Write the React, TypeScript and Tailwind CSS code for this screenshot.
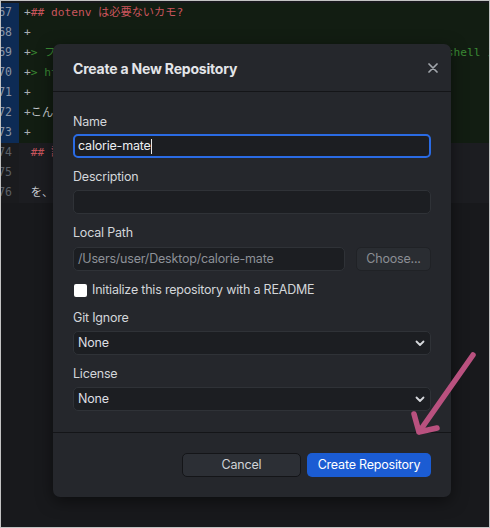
import React from "react";

const mono = { fontFamily: '"DejaVu Sans Mono", "Noto Sans CJK JP", monospace' };
const sans = { fontFamily: 'Inter, "Noto Sans CJK JP", sans-serif' };

type Line = { n: number; added: boolean; content: React.ReactNode };

const red = "text-[#c9555d]";
const green = "text-[#3b8a34]";
const plus = <span className="text-[#a9adb3]">+</span>;

const lines: Line[] = [
  { n: 67, added: true, content: <>{plus}<span className={red}>## dotenv は必要ないカモ?</span></> },
  { n: 68, added: true, content: <>{plus}</> },
  {
    n: 69,
    added: true,
    content: (
      <>
        {plus}
        <span className={`inline-block w-[416px] overflow-hidden whitespace-nowrap align-top ${green}`}>
          {"> フロントエンドの環境変数は"}
        </span>
        <span className={green}>shell スクリプト</span>
      </>
    ),
  },
  { n: 70, added: true, content: <>{plus}<span className={green}>{"> https://example.com"}</span></> },
  { n: 71, added: true, content: <>{plus}</> },
  { n: 72, added: true, content: <>{plus}<span className="text-[#c9ccd1]">こんな感じ</span></> },
  { n: 73, added: true, content: <>{plus}</> },
  { n: 74, added: false, content: <span className={red}>{" ## 設定"}</span> },
  { n: 75, added: false, content: <></> },
  { n: 76, added: false, content: <span className="text-[#c9ccd1]">{" を、設定する"}</span> },
];

function Chevron() {
  return (
    <svg width="10" height="7" viewBox="0 0 10 7" className="shrink-0">
      <path d="M1.5 1.5 L5 5 L8.5 1.5" fill="none" stroke="#d6d8dc" strokeWidth="1.8" strokeLinecap="round" strokeLinejoin="round" />
    </svg>
  );
}

const txt = "text-[12.5px] tracking-[-0.2px]";

function Label({ children }: { children: React.ReactNode }) {
  return <div className={`h-[16px] leading-[16px] ${txt} text-[#d3d6da]`}>{children}</div>;
}

function Select() {
  return (
    <div className="mt-[5px] h-[24px] rounded-[5px] border border-[#2f3237] bg-[#1c1e22] flex items-center justify-between pl-[4px] pr-[5px]">
      <span className={`${txt} text-[#dcdee2]`}>None</span>
      <Chevron />
    </div>
  );
}

export default function App() {
  return (
    <div className="relative w-[490px] h-[528px] overflow-hidden border border-[#c3c3c3] bg-[#18191c]" style={sans}>
      {/* code diff background */}
      <div className="flex flex-col pt-[2px]" style={mono}>
        {lines.map((l) => (
          <div key={l.n} className="flex h-[20px]">
            <div
              className={`w-[18px] shrink-0 overflow-hidden flex justify-end items-center pr-[7px] text-[11.5px] ${
                l.added ? "bg-[#0d2b55] text-[#8b95a5]" : "bg-[#1a1b1e] text-[#5d6168]"
              }`}
            >
              <span className="whitespace-nowrap">{l.n}</span>
            </div>
            <div
              className={`flex-1 block leading-[20px] pl-[5px] text-[11.2px] whitespace-pre overflow-hidden ${
                l.added ? "bg-[#121d12]" : "bg-[#1c1d21]"
              }`}
            >
              {l.content}
            </div>
          </div>
        ))}
      </div>

      {/* modal */}
      <div className="absolute left-[52px] top-[43px] w-[398px] rounded-[7px] bg-[#25272c] shadow-[0_4px_16px_rgba(0,0,0,0.5)]">
        <div className="h-[48px] flex items-center justify-between pl-[20px] pr-[13px] pt-[1px] border-b border-[#141518]">
          <span className="text-[14px] font-bold tracking-[-0.2px] text-[#e3e5e9]">Create a New Repository</span>
          <svg width="10" height="10" viewBox="0 0 10 10">
            <path d="M1 1 L9 9 M9 1 L1 9" stroke="#a2a6ac" strokeWidth="1.7" strokeLinecap="round" />
          </svg>
        </div>

        <div className="px-[20px] pt-[22px] pb-[21px] flex flex-col">
          <Label>Name</Label>
          <div className="mt-[4px] h-[24px] rounded-[5px] border-2 border-[#2a6be4] bg-[#1c1e22] flex items-center pl-[3px]">
            <span className={`${txt} text-[#eceef1]`}>calorie-mate</span>
            <span className="w-px h-[15px] bg-[#e8e8e8]" />
          </div>

          <div className="mt-[11px]">
            <Label>Description</Label>
          </div>
          <div className="mt-[5px] h-[24px] rounded-[5px] border border-[#2f3237] bg-[#1c1e22]" />

          <div className="mt-[11px]">
            <Label>Local Path</Label>
          </div>
          <div className="mt-[6px] flex gap-[11px]">
            <div className="flex-1 h-[24px] rounded-[5px] border border-[#2f3237] bg-[#1c1e22] flex items-center pl-[4px]">
              <span className={`${txt} text-[#8d9198]`}>/Users/user/Desktop/calorie-mate</span>
            </div>
            <div className="w-[75px] h-[24px] rounded-[5px] border border-[#202226] bg-[#2a2d32] flex items-center justify-center">
              <span className={`${txt} text-[#8b8e94]`}>Choose...</span>
            </div>
          </div>

          <div className="mt-[11px] h-[16px] flex items-center gap-[5px]">
            <div className="w-[13px] h-[13px] rounded-[2px] bg-white ml-px" />
            <span className={`${txt} text-[#d3d6da]`}>Initialize this repository with a README</span>
          </div>

          <div className="mt-[12px]">
            <Label>Git Ignore</Label>
          </div>
          <Select />

          <div className="mt-[11px]">
            <Label>License</Label>
          </div>
          <Select />
        </div>

        <div className="border-t border-[#141518] px-[20px] pt-[20px] pb-[20px] flex justify-end gap-[6px]">
          <div className="w-[119px] h-[24px] rounded-[5px] border border-[#141518] bg-[#2c2f35] flex items-center justify-center">
            <span className={`${txt} text-[#d0d3d7]`}>Cancel</span>
          </div>
          <div className="w-[124px] h-[24px] rounded-[5px] bg-[#1b5cd3] flex items-center justify-center">
            <span className={`${txt} text-white`}>Create Repository</span>
          </div>
        </div>
      </div>

      {/* annotation arrow */}
      <svg className="absolute left-0 top-0 pointer-events-none" width="490" height="528" viewBox="0 0 490 528">
        <path
          d="M472 354 L418 431 M413 413 L418 431 L436 427"
          fill="none"
          stroke="#b9517f"
          strokeWidth="5.5"
          strokeLinecap="round"
          strokeLinejoin="round"
        />
      </svg>
    </div>
  );
}
